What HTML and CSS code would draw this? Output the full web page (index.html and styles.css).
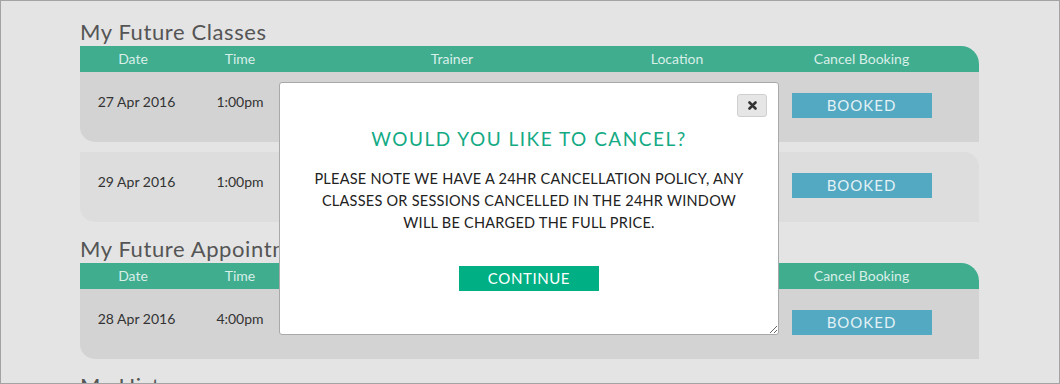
FILE: index.html
```html
<!DOCTYPE html>
<html lang="en">
  <head>
    <meta charset="UTF-8" />
    <title>My Bookings</title>
    <link rel="stylesheet" href="styles.css">
  </head>
  <body>
    <div id="page">
      <div id="content">
        <h2 class="title">My Future Classes</h2>
        <div class="table">
          <div class="head">
            <div>Date</div>
            <div>Time</div>
            <div>Trainer</div>
            <div>Location</div>
            <div>Cancel Booking</div>
          </div>
          <div class="row">
            <div>27 Apr 2016</div>
            <div>1:00pm</div>
            <div></div>
            <div></div>
            <div><span class="booked">BOOKED</span></div>
          </div>
          <div class="row alt">
            <div>29 Apr 2016</div>
            <div>1:00pm</div>
            <div></div>
            <div></div>
            <div><span class="booked">BOOKED</span></div>
          </div>
        </div>

        <h2 class="title">My Future Appointments</h2>
        <div class="table">
          <div class="head">
            <div>Date</div>
            <div>Time</div>
            <div>Trainer</div>
            <div>Location</div>
            <div>Cancel Booking</div>
          </div>
          <div class="row">
            <div>28 Apr 2016</div>
            <div>4:00pm</div>
            <div></div>
            <div></div>
            <div><span class="booked">BOOKED</span></div>
          </div>
        </div>

        <h2 class="title">My History</h2>
      </div>

      <!-- popup -->
      <div id="dialog">
        <button class="close" title="close">
          <svg width="9" height="9" viewBox="0 0 9 9">
            <path d="M1.5 1.5 L7.5 7.5 M7.5 1.5 L1.5 7.5" stroke="#333" stroke-width="2.6" stroke-linecap="round" />
          </svg>
        </button>
        <div class="dlg-title">WOULD YOU LIKE TO CANCEL?</div>
        <div class="dlg-text">
          PLEASE NOTE WE HAVE A 24HR CANCELLATION POLICY, ANY<br />
          CLASSES OR SESSIONS CANCELLED IN THE 24HR WINDOW<br />
          WILL BE CHARGED THE FULL PRICE.
        </div>
        <div class="dlg-btn"><span id="continue">CONTINUE</span></div>
      </div>
    </div>
  </body>
</html>
```

FILE: styles.css
```css
html,
body {
  margin: 0;
  padding: 0;
}
body {
  font-family: "Lato", "Liberation Sans", sans-serif;
  background: #e4e4e4;
}
#page {
  position: relative;
  width: 1058px;
  height: 382px;
  border: solid 1px #a3a3a3;
  overflow: hidden;
}
#content {
  width: 899px;
  margin-left: 79px;
}
.title {
  margin: 18px 0 1px;
  font-size: 22px;
  line-height: 26px;
  font-weight: normal;
  letter-spacing: 0.6px;
  color: #555;
}
.table + .title {
  margin-top: 14px;
}
.head,
.row {
  display: grid;
  grid-template-columns: 106px 108px 316px 134px 235px;
  text-align: center;
}
.head {
  height: 26px;
  line-height: 26px;
  background: #40ad8f;
  color: #d9efe8;
  font-size: 14px;
  border-top-right-radius: 18px;
}
.row {
  height: 70px;
  background: #d3d3d3;
  color: #333;
  font-size: 14px;
  border-radius: 0 0 0 15px;
  padding-top: 21px;
  box-sizing: border-box;
  line-height: 17px;
}
.row > div:first-child {
  padding-left: 7px;
}
.row + .row {
  margin-top: 10px;
  border-radius: 0 15px 0 15px;
}
.row.alt {
  background: #dcdddc;
}
.booked {
  display: block;
  width: 140px;
  height: 25px;
  margin: 0 auto;
  line-height: 25px;
  background: #53a8c2;
  color: #e2f1f5;
  font-size: 15px;
  letter-spacing: 1px;
}
#dialog {
  position: absolute;
  left: 278px;
  top: 81px;
  width: 498px;
  height: 251px;
  background: white;
  border: solid 1px #a9a9a9;
  border-radius: 3px;
  text-align: center;
  resize: both;
  overflow: auto;
}
.close {
  position: absolute;
  top: 11px;
  right: 11px;
  width: 30px;
  height: 23px;
  padding: 0;
  background: #e6e6e6;
  border: solid 1px #cfcfcf;
  border-radius: 3px;
}
.close svg {
  display: block;
  margin: 0 auto;
}
.dlg-title {
  margin-top: 44px;
  line-height: 24px;
  font-size: 19px;
  letter-spacing: 1.5px;
  color: #14aa84;
}
.dlg-text {
  margin-top: 17px;
  line-height: 22px;
  font-size: 14.5px;
  letter-spacing: 0.25px;
  color: #222;
}
.dlg-btn {
  margin-top: 32px;
}
#continue {
  display: inline-block;
  width: 140px;
  height: 25px;
  line-height: 25px;
  background: #00b084;
  color: white;
  font-size: 15px;
  letter-spacing: 0.6px;
}
```
